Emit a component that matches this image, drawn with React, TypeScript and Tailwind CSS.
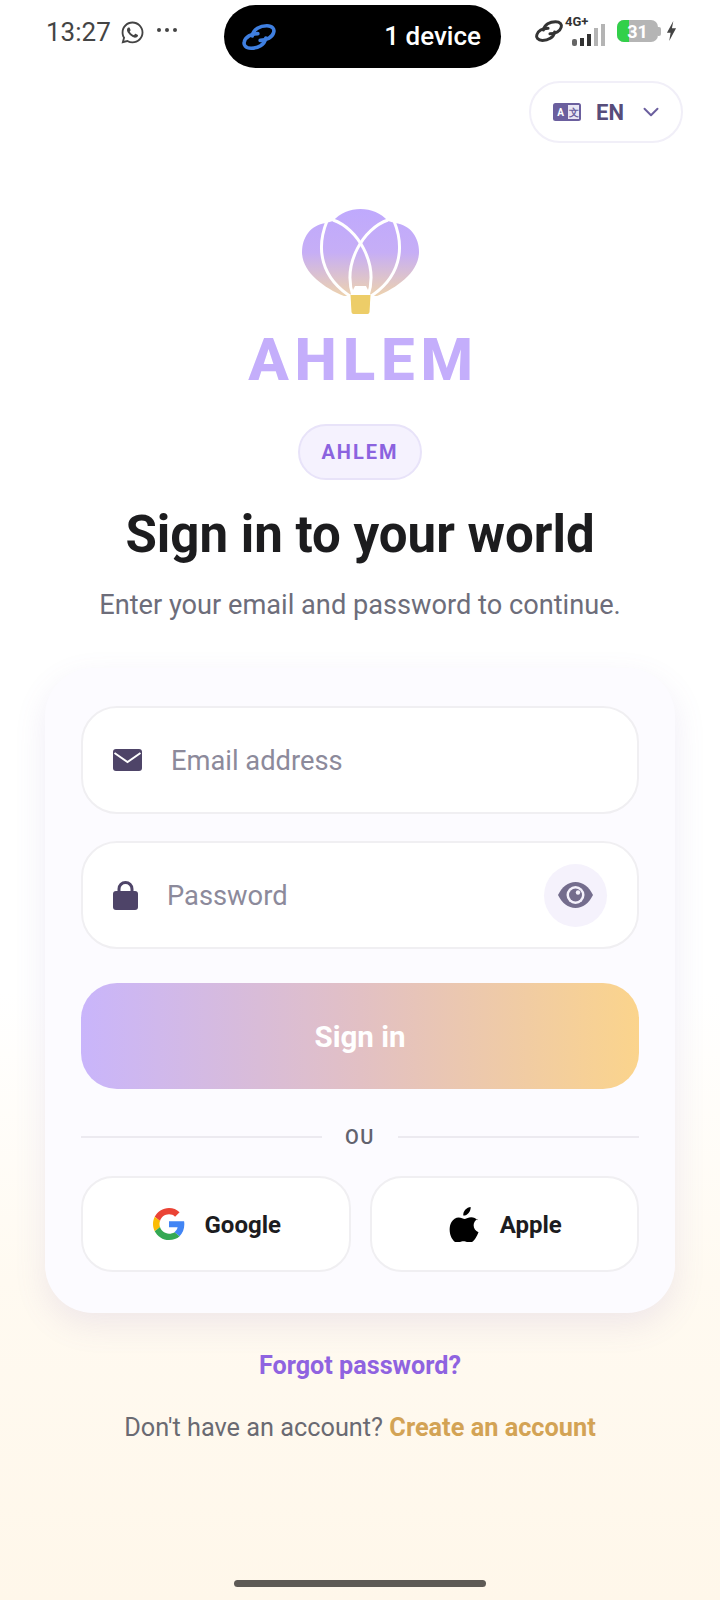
import React from 'react';
import { ChevronDown } from 'lucide-react';
import { FaWhatsapp } from 'react-icons/fa';

const fontStack = { fontFamily: 'Roboto, "Noto Sans", sans-serif' };

function LinkIcon({ className }: { className?: string }) {
  return (
    <svg viewBox="0 0 32 32" className={className} fill="none" stroke="currentColor" strokeWidth="3.200" strokeLinecap="round">
      <path d="M10 15 C11 9 17 6 23 6 C28 6 30 9 29 12 C28 16 23 19 17 19" />
      <path d="M22 17 C21 23 15 26 9 26 C4 26 2 23 3 20 C4 16 9 13 15 13" />
    </svg>
  );
}

function StatusBar() {
  return (
    <div className="flex h-[68px] items-start pt-[5px]">
      <div className="flex w-[224px] items-center pl-[46px] pt-[11px] text-[#444444]">
        <span className="text-[26px] leading-[32px]">13:27</span>
        <FaWhatsapp className="ml-[9px] text-[25px]" />
        <div className="ml-[12px] mb-[5px] flex gap-[4px]">
          <span className="h-[4px] w-[4px] rounded-full bg-[#444444]" />
          <span className="h-[4px] w-[4px] rounded-full bg-[#444444]" />
          <span className="h-[4px] w-[4px] rounded-full bg-[#444444]" />
        </div>
      </div>
      <div className="flex h-[63px] w-[277px] items-center justify-between rounded-full bg-black pl-[17px] pr-[20px]">
        <LinkIcon className="h-[36px] w-[36px] text-[#3f7fe0]" />
        <span className="text-[26px] font-medium text-white">1 device</span>
      </div>
      <div className="flex h-[38px] items-center pl-[33px] pt-[14px] text-[#333333]">
        <LinkIcon className="h-[30px] w-[30px]" />
        <div className="relative ml-[1px] h-[30px] w-[44px]">
          <span className="absolute left-0 top-[-1px] text-[13px] font-bold leading-[14px]">4G+</span>
          <div className="absolute bottom-0 left-[7px] flex items-end gap-[3px]">
            <span className="h-[7px] w-[5px] rounded-[2px] bg-[#666666]" />
            <span className="h-[8px] w-[4px] bg-[#333333]" />
            <span className="h-[12px] w-[4px] bg-[#333333]" />
            <span className="h-[18px] w-[4px] bg-[#b4b4b4]" />
            <span className="h-[22px] w-[4px] bg-[#b4b4b4]" />
          </div>
        </div>
        <div className="ml-[8px] flex items-center">
          <div className="relative flex h-[22px] w-[41px] items-center justify-center overflow-hidden rounded-[7px] bg-[#b5b5b5]">
            <span className="absolute left-0 top-0 h-full w-[12px] bg-[#32d04a]" />
            <span className="relative text-[18px] font-bold text-white">31</span>
          </div>
          <span className="h-[9px] w-[3px] rounded-r-[2px] bg-[#b5b5b5]" />
        </div>
        <svg viewBox="0 0 12 22" className="ml-[4px] h-[20px] w-[13px]" fill="#444444">
          <path d="M8 0 L1 13 H5 L3.500 22 L11 8 H6.500 Z" />
        </svg>
      </div>
    </div>
  );
}

function TranslateIcon() {
  return (
    <svg viewBox="0 0 28 18" className="h-[18px] w-[28px]">
      <rect width="28" height="18" rx="2.500" fill="#6b5f9e" />
      <rect x="15" y="2" width="11" height="14" fill="#e9e6f4" />
      <text x="7.500" y="13" textAnchor="middle" fontSize="10" fontWeight="700" fill="#ffffff" fontFamily="Roboto">A</text>
      <text x="20.500" y="13" textAnchor="middle" fontSize="10" fontWeight="700" fill="#6b5f9e" fontFamily="Roboto">文</text>
    </svg>
  );
}

function Balloon() {
  return (
    <svg viewBox="0 0 117 107" className="h-[107px] w-[117px]">
      <defs>
        <linearGradient id="balloonFill" x1="0" y1="0" x2="0" y2="1">
          <stop offset="0" stopColor="#bfa9fd" />
          <stop offset="0.5" stopColor="#c6aef6" />
          <stop offset="1" stopColor="#edd2ae" />
        </linearGradient>
      </defs>
      <path
        d="M31 13 C38 5 48 1 58.500 1 C69 1 79 5 86 13 L93 15 C109 17 117 30 117 44 C117 64 95 80 75 88 L42 88 C22 80 0 64 0 44 C0 30 8 17 24 15 Z"
        fill="url(#balloonFill)"
      />
      <path d="M53 78 H64 L70 90 H47 Z" fill="#ffffff" />
      <g fill="none" stroke="#ffffff" strokeWidth="3">
        <path d="M25 13 C14 40 18 70 51 90" />
        <path d="M92 13 C103 40 99 70 66 90" />
        <path d="M86 12 C62 20 40 55 51 88" />
        <path d="M31 12 C55 20 77 55 66 88" />
      </g>
      <path d="M48.500 87 H68.500 L67.500 104 Q67.300 106 65.500 106 H51.500 Q49.700 106 49.500 104 Z" fill="#edcd68" />
    </svg>
  );
}

function GoogleLogo() {
  return (
    <svg viewBox="0 0 48 48" className="h-[32px] w-[32px]">
      <path fill="#EA4335" d="M24 9.500c3.500 0 6.700 1.300 9.100 3.500l6.800-6.800C35.800 2.400 30.200 0 24 0 14.600 0 6.500 5.400 2.600 13.200l7.900 6.200C12.400 13.600 17.700 9.500 24 9.500z" />
      <path fill="#4285F4" d="M47 24.500c0-1.600-.1-3.100-.4-4.500H24v9h12.900c-.6 3-2.200 5.500-4.700 7.200l7.700 6C44.400 38 47 31.800 47 24.500z" />
      <path fill="#FBBC05" d="M10.500 28.600c-.5-1.400-.8-3-.8-4.600s.3-3.200.8-4.600l-7.900-6.200C.9 16.500 0 20.100 0 24s.9 7.500 2.600 10.800l7.900-6.200z" />
      <path fill="#34A853" d="M24 48c6.500 0 11.900-2.100 15.900-5.800l-7.700-6c-2.200 1.400-4.900 2.300-8.200 2.300-6.300 0-11.600-4.100-13.500-9.900l-7.900 6.200C6.500 42.600 14.600 48 24 48z" />
    </svg>
  );
}

function AppleLogo() {
  return (
    <svg viewBox="0 0 24 28" className="h-[35px] w-[31px]" fill="#000000">
      <path d="M16.900 0c.2 1.900-.6 3.500-1.600 4.700-1.100 1.300-2.700 2.200-4.300 2.100-.2-1.700.6-3.500 1.600-4.600C13.700 1 15.500.1 16.900 0z" />
      <path d="M22.300 9.500c-1.900 1.200-3 3-3 5.100 0 2.500 1.500 4.600 3.900 5.500-.6 1.700-1.400 3.300-2.400 4.800-1.400 2-2.800 3.600-4.700 3.600-1.900 0-2.700-1.100-4.900-1.100-2.300 0-3.100 1.100-4.900 1.100-1.900 0-3.200-1.700-4.600-3.800C-.2 21.700-.6 15.500 1.600 11.900c1.300-2.200 3.500-3.600 5.700-3.600 2.100 0 3.500 1.200 5 1.200 1.500 0 2.700-1.300 5.100-1.300 1.900 0 3.800 .8 4.900 2.300z" />
    </svg>
  );
}

function SocialButton({ label, icon }: { label: string; icon: React.ReactNode }) {
  return (
    <div className="flex h-[96px] flex-1 items-center justify-center gap-[20px] rounded-[32px] border-2 border-[#f0eff2] bg-white pl-[2px]">
      {icon}
      <span className="pt-[2px] text-[24px] font-bold text-[#1c1c20]">{label}</span>
    </div>
  );
}

export default function App() {
  return (
    <div
      className="flex h-[1600px] w-[720px] flex-col overflow-hidden bg-[linear-gradient(180deg,#ffffff_0%,#ffffff_62%,#fffaf1_80%,#fff7ea_100%)]"
      style={fontStack}
    >
      <StatusBar />

      <div className="mt-[13px] flex justify-end pr-[37px]">
        <div className="flex h-[62px] w-[154px] items-center gap-[15px] rounded-full border-2 border-[#f1eff8] bg-white pl-[22px]">
          <TranslateIcon />
          <span className="text-[22px] font-bold text-[#574d7a]">EN</span>
          <ChevronDown size={26} strokeWidth={1.8} className="-ml-[1px] text-[#6b5f9e]" />
        </div>
      </div>

      <div className="flex flex-col items-center">
        <div className="mt-[65px]">
          <Balloon />
        </div>
        <div className="mt-[10px] pl-[7px] text-[60px] font-extrabold leading-[70px] tracking-[5.800px] text-[#c4aefb]">AHLEM</div>
        <div className="mt-[29px] flex h-[56px] w-[124px] items-center justify-center rounded-full border-2 border-[#e8e3f9] bg-[#f5f2fe] text-[20px] font-bold tracking-[2px] text-[#8b63df]">
          AHLEM
        </div>
        <h1 className="mt-[16px] text-[51px] font-bold leading-[78px] text-[#1c1c1e]">Sign in to your world</h1>
        <p className="mt-[13px] text-[27.200px] leading-[36px] text-[#6d6d7a]">Enter your email and password to continue.</p>
      </div>

      <div className="mx-[45px] mt-[45px] flex h-[645px] flex-col rounded-[48px] bg-[#fcfbff] px-[36px] pt-[38px] shadow-[0_12px_32px_rgba(120,100,180,0.12)]">
        <div className="flex h-[108px] items-center rounded-[36px] border-2 border-[#f0eff2] bg-white pl-[30px]">
          <svg viewBox="0 0 29 22" className="h-[22px] w-[29px]">
            <rect width="29" height="22" rx="3" fill="#4e4468" />
            <path d="M1.500 4 L14.500 13 L27.500 4" fill="none" stroke="#ffffff" strokeWidth="2" />
          </svg>
          <span className="ml-[29px] pt-[3px] text-[27.300px] text-[#8c8a9b]">Email address</span>
        </div>

        <div className="mt-[27px] flex h-[108px] items-center rounded-[36px] border-2 border-[#f0eff2] bg-white pl-[30px] pr-[30px]">
          <svg viewBox="0 0 25 29" className="h-[29px] w-[25px]">
            <path d="M6 11 V8 a6.500 6.500 0 0 1 13 0 V11" fill="none" stroke="#4e4468" strokeWidth="3" />
            <rect y="10" width="25" height="19" rx="3" fill="#4e4468" />
          </svg>
          <span className="ml-[29px] flex-1 pt-[3px] text-[27.300px] text-[#8c8a9b]">Password</span>
          <div className="flex h-[63px] w-[63px] items-center justify-center rounded-full bg-[#f5f2fc]">
            <svg viewBox="0 0 35 26" className="h-[26px] w-[35px]">
              <path d="M0 13 C4 5 10 0 17.500 0 C25 0 31 5 35 13 C31 21 25 26 17.500 26 C10 26 4 21 0 13 Z" fill="#746d8d" />
              <circle cx="17.500" cy="13" r="9" fill="#f5f2fc" />
              <circle cx="17.500" cy="13" r="6.500" fill="#746d8d" />
              <circle cx="20" cy="10.500" r="2.200" fill="#f5f2fc" />
            </svg>
          </div>
        </div>

        <div className="mt-[34px] flex h-[106px] items-center justify-center rounded-[36px] bg-[linear-gradient(90deg,#c9b5fb_0%,#e2c0c4_50%,#fbd48c_100%)] pt-[2px] text-[29.500px] font-bold text-white">
          Sign in
        </div>

        <div className="mt-[33px] flex items-center gap-[23px]">
          <div className="h-[2px] flex-1 bg-[#eceaf0]" />
          <span className="text-[20px] font-medium tracking-[1.500px] text-[#62626e]">OU</span>
          <div className="h-[2px] flex-1 bg-[#eceaf0]" />
        </div>

        <div className="mt-[24px] flex gap-[19px]">
          <SocialButton label="Google" icon={<GoogleLogo />} />
          <SocialButton label="Apple" icon={<AppleLogo />} />
        </div>
      </div>

      <div className="mt-[35px] text-center text-[25.200px] font-bold leading-[36px] text-[#8f63e0]">Forgot password?</div>
      <div className="mt-[26px] text-center text-[25.300px] leading-[36px] text-[#6a6a72]">
        Don't have an account? <span className="font-bold text-[#d3a355]">Create an account</span>
      </div>

      <div className="mx-auto mt-[134px] h-[7px] w-[252px] rounded-full bg-[#5e5a55]" />
    </div>
  );
}
